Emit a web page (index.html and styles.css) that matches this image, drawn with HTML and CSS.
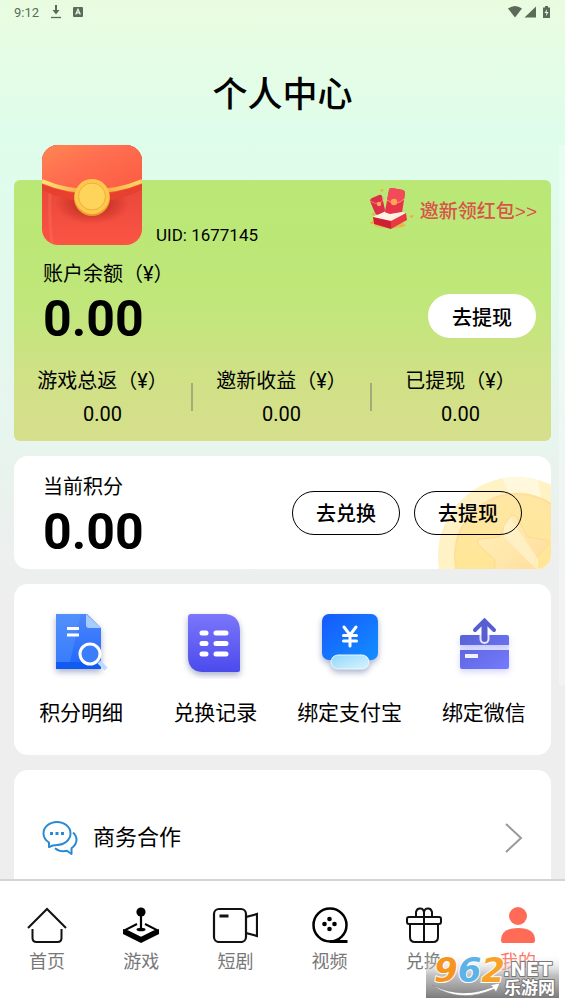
FILE: index.html
```html
<!DOCTYPE html>
<html lang="zh-CN">
<head>
<meta charset="UTF-8">
<meta name="viewport" content="width=device-width, initial-scale=1.0">
<title>个人中心</title>
<link rel="stylesheet" href="styles.css">
</head>
<body>

<main class="page">
    <div class="status-bar">
        <span>9:12</span>
        <svg width="10" height="14" viewBox="0 0 10 14"><path d="M5 0v6" stroke="#5c6b59" stroke-width="2"/><path d="M1.500 5h7L5 9.500z" fill="#5c6b59"/><path d="M0 12.500h10" stroke="#5c6b59" stroke-width="1.300"/></svg>
        <svg width="10" height="10" viewBox="0 0 10 10"><rect width="10" height="10" rx="1" fill="#5c6b59"/><path d="M2.700 7.500L5 2.300l2.300 5.200M3.500 5.800h3" stroke="#e6fbe2" stroke-width="1.300" fill="none"/></svg>
        <svg class="signals" width="43" height="14" viewBox="0 0 43 14" fill="#5c6b59"><path d="M0 3.500Q7 -1.500 14 3.500L7 12.500z"/><path d="M28 1.500v11H16.500z"/><path d="M35 2.500h2V1h3v1.500h2V13h-7z"/><path d="M39.200 4l-2.700 4h2l-.6 3.300 2.700-4.300h-2z" fill="#e6fbe2"/></svg>
    </div>

    <h1 class="title">个人中心</h1>

    <section class="balance-card">
        <div class="profile">
            <svg class="avatar" width="100" height="100" viewBox="0 0 100 100">
                <defs>
                    <linearGradient id="flap" x1="0" y1="0" x2="1" y2="1"><stop offset="0" stop-color="#ff8752"/><stop offset=".4" stop-color="#ff6e50"/><stop offset="1" stop-color="#fb5940"/></linearGradient>
                    <linearGradient id="pocket" x1="0" y1="0" x2="0" y2="1"><stop offset="0" stop-color="#dc3f30"/><stop offset="1" stop-color="#fb5445"/></linearGradient>
                    <linearGradient id="rope" x1="0" y1="0" x2="1" y2="0"><stop offset="0" stop-color="#ffe27c"/><stop offset=".5" stop-color="#f0a036"/><stop offset="1" stop-color="#ffd766"/></linearGradient>
                    <radialGradient id="shade"><stop offset=".4" stop-color="#b92a20" stop-opacity=".7"/><stop offset="1" stop-color="#b92a20" stop-opacity="0"/></radialGradient>
                    <clipPath id="avatarClip"><rect width="100" height="100" rx="16"/></clipPath>
                </defs>
                <g clip-path="url(#avatarClip)">
                    <rect width="100" height="100" fill="url(#pocket)"/>
                    <path d="M8 48q-1 28 2 52" stroke="#ff7560" stroke-width="3" fill="none" opacity=".35"/>
                    <ellipse cx="50" cy="59" rx="37" ry="20" fill="url(#shade)"/>
                    <path d="M0 0h100v45Q75 57 50 57T0 45z" fill="#e8402f"/>
                    <path d="M0 0h100v39Q75 49 50 49T0 39z" fill="url(#flap)"/>
                    <path d="M0 36Q23 46 50 46T100 36" stroke="url(#rope)" stroke-width="4" fill="none"/>
                    <circle cx="50" cy="53" r="18" fill="#e99b2e"/>
                    <circle cx="50" cy="51.500" r="17.500" fill="#ffc84c"/>
                    <circle cx="50" cy="51.500" r="13.500" fill="#ffd45a" stroke="#eeae3c" stroke-width="1"/>
                </g>
            </svg>
            <span class="uid">UID: 1677145</span>
            <a class="invite" href="#invite">
                <svg width="44" height="42" viewBox="0 0 44 42">
                    <ellipse cx="20" cy="37" rx="16" ry="3.500" fill="#e4b84c" opacity=".6"/>
                    <path d="M3 29l11-5 22 1-15 9z" fill="#fff0dd"/>
                    <path d="M0 13q0-2 2-3l7-3q2-1 3 1l3 14q0 2-2 3l-5 2q-2 0-3-2z" fill="#dc2f48"/>
                    <path d="M0 13q6 4 10 2t3-6" stroke="#ff8e72" stroke-width=".8" fill="none"/>
                    <path d="M19 2q0-2 3-2l11 2q2 1 2 3l-3 20q-1 3-4 3l-10-1q-3-1-3-4z" fill="#e83449"/>
                    <path d="M19 2q0-2 3-2l11 2q2 1 2 3l-1 6q-9 8-17 1z" fill="#f34a5a"/>
                    <path d="M17 12q9 7 17-1" stroke="#ff9b7c" stroke-width=".9" fill="none"/>
                    <circle cx="24" cy="14" r="3.200" fill="#ffa552"/><circle cx="9" cy="16" r="2.200" fill="#ffa552"/>
                    <path d="M14 24l6 2 12-2 4 1-15 8-18-4z" fill="#fff3e4"/>
                    <path d="M3 29l18 4v8L4 36z" fill="#cf1f32"/><path d="M21 33l15-8 1 7-16 9z" fill="#e93a41"/>
                    <path d="M10 2l4-1-2 3zM2 25l4 1-3 2zM-1 35l4-2 1 3zM39 28l5-1-2 3zM28 39l4-3 2 2z" fill="#f3a83c"/>
                </svg>
                <span>邀新领红包&gt;&gt;</span>
            </a>
        </div>
        <div class="account">
            <div>
                <div class="label">账户余额（¥）</div>
                <div class="amount">0.00</div>
            </div>
            <button class="pill white" type="button">去提现</button>
        </div>
        <div class="stats">
            <div class="stat"><div class="label">游戏总返（¥）</div><div class="value">0.00</div></div>
            <div class="stat"><div class="label">邀新收益（¥）</div><div class="value">0.00</div></div>
            <div class="stat"><div class="label">已提现（¥）</div><div class="value">0.00</div></div>
        </div>
    </section>

    <section class="card points">
        <svg class="coin" width="113" height="92" viewBox="0 0 113 92">
            <defs>
                <linearGradient id="coinFace" x1="0" y1="0" x2="0" y2="1"><stop offset="0" stop-color="#ffe7a4"/><stop offset="1" stop-color="#ffe58d"/></linearGradient>
                <linearGradient id="star" x1="0" y1="0" x2="1" y2="1"><stop offset="0" stop-color="#fff0bb"/><stop offset="1" stop-color="#ffdc98"/></linearGradient>
            </defs>
            <circle cx="79" cy="79" r="79" fill="#fff2c5"/>
            <path d="M64 2q16-4 36 1l3 18q-16-8-31-5z" fill="#fff8dd"/>
            <circle cx="79" cy="79" r="62" fill="url(#coinFace)" stroke="#ffdf9b" stroke-width="2"/>
            <path d="M71 41q4-6 8 0l11 19 18 3q5 2 1 6L97 82l3 24-20-11-24 11 1-23-16-15q-4-5 2-6l18-2z" fill="url(#star)" stroke="#fcd994"/>
            <path d="M66 49l6-8 28 41v12L66 60z" fill="#fff6d6" opacity=".6"/>
        </svg>
        <div class="score">
            <div class="label">当前积分</div>
            <div class="amount">0.00</div>
        </div>
        <div class="buttons">
            <button class="pill outline" type="button">去兑换</button>
            <button class="pill outline" type="button">去提现</button>
        </div>
    </section>

    <section class="card shortcuts">
        <a href="#detail">
            <svg width="72" height="72" viewBox="0 0 72 72">
                <defs>
                    <linearGradient id="doc" x1="0" y1="0" x2="0" y2="1"><stop offset="0" stop-color="#4c87fb"/><stop offset="1" stop-color="#1f66fb"/></linearGradient>
                </defs>
                <g class="shadow"><path d="M11 7h31l14 14v41H11z" fill="url(#doc)"/></g>
                <path d="M11 7h25L25 55H11z" fill="#62a1ff" opacity=".35"/>
                <path d="M11 55h45v7H11z" fill="#0a55f0" opacity=".7"/>
                <path d="M41 7l15 14H44q-3 0-3-3z" fill="#a7ccff"/>
                <path d="M22 21.500h12M22 28h12" stroke="#fff" stroke-width="3"/>
                <path d="M54 55l7 7" stroke="#bcd9ff" stroke-width="4"/>
                <circle cx="45" cy="47" r="10" fill="#3b7dfa" stroke="#fff" stroke-width="3"/>
            </svg>
            <span>积分明细</span>
        </a>
        <a href="#record">
            <svg width="72" height="72" viewBox="0 0 72 72">
                <defs><linearGradient id="list" x1="0" y1="0" x2="0" y2="1"><stop offset="0" stop-color="#7c76fa"/><stop offset="1" stop-color="#4b4bed"/></linearGradient></defs>
                <g class="shadow"><path d="M12 7h35q14 2 14 17v39q0 2-2 2H23Q9 64 9 49V10q0-3 3-3z" fill="url(#list)"/></g>
                <path d="M23 26h4M37 26h10M23 36.500h4M37 36.500h10M23 47h4M37 47h10" stroke="#fff" stroke-width="5" stroke-linecap="round"/>
            </svg>
            <span>兑换记录</span>
        </a>
        <a href="#alipay">
            <svg width="72" height="72" viewBox="0 0 72 72">
                <defs>
                    <linearGradient id="pay" x1="0" y1="0" x2="1" y2="1"><stop offset="0" stop-color="#1659fc"/><stop offset="1" stop-color="#128fff"/></linearGradient>
                    <linearGradient id="tray" x1="0" y1="0" x2="1" y2="1"><stop offset="0" stop-color="#91d7fa"/><stop offset="1" stop-color="#daf4fe"/></linearGradient>
                </defs>
                <g class="shadow"><rect x="8" y="7" width="56" height="46" rx="7" fill="url(#pay)"/><rect x="17" y="48" width="38" height="14" rx="7" fill="url(#tray)" stroke="#eafaff"/></g>
                <path d="M30 20l6 8 6-8M36 28v11M29.500 28.500h13M29.500 34h13" stroke="#fff" stroke-width="3" fill="none" stroke-linecap="round"/>
            </svg>
            <span>绑定支付宝</span>
        </a>
        <a href="#wechat">
            <svg width="72" height="72" viewBox="0 0 72 72">
                <defs><linearGradient id="bank" x1="0" y1="0" x2="1" y2="1"><stop offset="0" stop-color="#5961d6"/><stop offset="1" stop-color="#747bff"/></linearGradient></defs>
                <rect x="12" y="38" width="49" height="5" fill="#e8e9ff"/>
                <g class="glow"><path d="M14 28h45q2 0 2 2v8H12v-8q0-2 2-2zM12 43h49v17q0 2-2 2H14q-2 0-2-2z" fill="url(#bank)"/></g>
                <rect x="17" y="47" width="13" height="4" fill="#f0f0ff"/>
                <path d="M36.500 22v10" stroke="#fff" stroke-width="10" stroke-linecap="round" stroke-opacity=".85"/>
                <path d="M36.500 17v15" stroke="#565ed2" stroke-width="6" stroke-linecap="round"/>
                <path d="M27 23l9.500-9.500 9.500 9.500" stroke="#565ed2" stroke-width="4" fill="none" stroke-linecap="round"/>
            </svg>
            <span>绑定微信</span>
        </a>
    </section>

    <section class="card menu">
        <a href="#cooperation">
            <svg width="36" height="36" viewBox="0 0 36 36" fill="none" stroke="#2a8ad4" stroke-width="2" stroke-linejoin="round"><path d="M7 27V22.500Q1.500 19 1.500 13.500C1.500 7 7.500 2 15 2s13.500 5 13.500 11.500S22 25 15 25q-4 0-8 2z"/><path d="M31 12.500q3.500 3 3.500 7.500t-5 8.200V34l-4.500-3.200q-7 1.500-12-2.600"/><path d="M8 13.500h3M13.500 13.500h3M19 13.500h3" stroke-width="3"/></svg>
            <span>商务合作</span>
            <svg class="arrow" width="18" height="32" viewBox="0 0 18 32" fill="none" stroke="#999" stroke-width="2"><path d="M1 2l15 14L1 30"/></svg>
        </a>
    </section>

    <div class="scroll-thumb"></div>
</main>

<nav class="tabs">
    <a href="#home">
        <svg width="40" height="36" viewBox="0 0 40 36" fill="none" stroke="#111" stroke-width="2"><path d="M1 21L20 2l19 19"/><path d="M5.500 22v9q0 4 4 4h21q4 0 4-4v-9"/></svg>
        <span>首页</span>
    </a>
    <a href="#game">
        <svg width="36" height="36" viewBox="0 0 36 36"><circle cx="18" cy="5" r="4.600"/><path d="M18 8v14" stroke="#000" stroke-width="2.200"/><ellipse cx="18" cy="22.500" rx="4.500" ry="1.800"/><path d="M14 17L2 23l16 8 16-8-12-6" fill="none" stroke="#000" stroke-width="2"/><path d="M0 22l18 9 18-9v5l-18 9-18-9z"/></svg>
        <span>游戏</span>
    </a>
    <a href="#drama">
        <svg width="46" height="36" viewBox="0 0 46 36" fill="none" stroke="#111" stroke-width="2.200"><rect x="2" y="2" width="32" height="33" rx="5"/><path d="M34 10l11-3v22l-11-3"/><path d="M7.500 9h9" stroke-width="3"/></svg>
        <span>短剧</span>
    </a>
    <a href="#video">
        <svg width="36" height="36" viewBox="0 0 36 36"><circle cx="18" cy="18" r="16.500" fill="none" stroke="#000" stroke-width="2.500"/><path d="M18 34.500h17.500" stroke="#000" stroke-width="3"/><circle cx="17.500" cy="12" r="2.300"/><circle cx="12.500" cy="17" r="2.300"/><circle cx="22.500" cy="17" r="2.300"/><circle cx="17.500" cy="22" r="2.300"/></svg>
        <span>视频</span>
    </a>
    <a href="#exchange">
        <svg width="36" height="36" viewBox="0 0 36 36" fill="none" stroke="#111" stroke-width="2"><rect x="1" y="10" width="34" height="7" rx="2"/><path d="M4 17v13q0 5 5 5h18q5 0 5-5V17M18 10v25"/><path d="M18 10V6q0-4-3.500-4.500T10 5v5M18 10V6q0-4 3.500-4.500T26 5v5"/></svg>
        <span>兑换</span>
    </a>
    <a class="active" href="#mine">
        <svg width="36" height="36" viewBox="0 0 36 36" fill="#ff6b57"><circle cx="18" cy="9" r="9"/><path d="M1 33q0-12 17-12t17 12q0 3-2 3H3q-2 0-2-3z"/></svg>
        <span>我的</span>
    </a>
</nav>

<svg class="watermark" width="133" height="55" viewBox="0 -10 133 55">
    <defs>
        <linearGradient id="haze" x1="0" y1="0" x2="0" y2="1"><stop offset="0" stop-color="#fff" stop-opacity="0"/><stop offset=".5" stop-color="#aaa" stop-opacity=".75"/><stop offset="1" stop-color="#7b7b7b"/></linearGradient>
    </defs>
    <rect width="133" height="45" fill="url(#haze)"/>
    <text class="wm-number" x="8" y="29"><tspan fill="#f7941e">9</tspan><tspan fill="#5db2e8">6</tspan><tspan fill="#f7a329">2</tspan></text>
    <path d="M6 32q29 15 61 2l-3-2 10-2-4 9-2-3Q34 51 6 32z" fill="#fff" stroke="#888" stroke-width=".5"/>
    <text class="wm-net" x="77" y="23">.NET</text>
    <text class="wm-name" x="78" y="41">乐游网</text>
</svg>

</body>
</html>
```
FILE: styles.css
```css
* {
    box-sizing: border-box;
}
body {
    margin: 0;
    height: 100vh;
    display: flex;
    flex-direction: column;
    position: relative;
    font-family: Roboto, "Noto Sans CJK SC", sans-serif;
    font-size: 20px;
    color: #000;
    background: #fff;
}
a {
    color: inherit;
    text-decoration: none;
}
svg {
    display: block;
    flex-shrink: 0;
}
.page {
    flex: 1;
    min-height: 0;
    overflow: hidden;
    position: relative;
    padding: 0 14px;
    background: linear-gradient(#e9fce0, #dffdeb 130px, #e0fbec 220px, #e7f5ee 420px, #eeeeee 600px);
}
.status-bar {
    display: flex;
    align-items: center;
    gap: 12px;
    height: 24px;
    font-size: 13px;
    color: #5c6b59;
}
.signals {
    margin-left: auto;
}
.title {
    margin: 48px 0 60px;
    font-size: 35px;
    font-weight: 500;
    line-height: 48px;
    text-align: center;
}
.label {
    line-height: 28px;
}
.amount {
    font-size: 50px;
    font-weight: 700;
    line-height: 62px;
}
.pill {
    width: 108px;
    height: 44px;
    padding: 0;
    border: none;
    border-radius: 22px;
    font-family: inherit;
    font-size: 20px;
    font-weight: 500;
    color: #000;
}
.white {
    background: #fff;
}
.outline {
    background: transparent;
    border: 1px solid #000;
}

.balance-card {
    display: flow-root;
    border-radius: 6px;
    background: linear-gradient(#b9e876, #bfe779 45%, #d0e186 75%, #d6df8c);
}
.profile {
    display: flex;
    align-items: flex-end;
    gap: 14px;
    margin-top: -35px;
    padding: 0 14px 0 28px;
}
.uid {
    font-size: 17px;
    line-height: 20px;
}
.invite {
    display: flex;
    align-items: center;
    gap: 6px;
    margin-left: auto;
    margin-bottom: 15px;
    font-family: "Liberation Sans", "Noto Sans CJK SC", sans-serif;
    font-size: 19px;
    font-weight: 500;
    color: #d9534a;
}
.account {
    display: flex;
    justify-content: space-between;
    align-items: flex-end;
    padding: 15px 15px 0 29px;
}
.account .pill {
    margin-bottom: 12px;
}
.stats {
    display: grid;
    grid-template-columns: repeat(3, 1fr);
    padding: 17px 0 15px;
    text-align: center;
}
.stat {
    display: grid;
    grid-template-columns: 1fr 2px;
    row-gap: 7px;
}
.stat .label,
.stat .value {
    grid-column: 1;
}
.stat::after {
    content: "";
    grid-column: 2;
    grid-row: 1 / 3;
    height: 28px;
    align-self: center;
    background: #a4aa7b;
}
.stat:last-child::after {
    background: none;
}
.value {
    line-height: 24px;
}

.card {
    margin-top: 15px;
    border-radius: 14px;
    background: #fff;
}
.points {
    position: relative;
    overflow: hidden;
    display: flex;
    justify-content: space-between;
    align-items: center;
    padding: 0 29px;
}
.points > div {
    position: relative;
}
.score {
    padding: 17px 0 6px;
}
.coin {
    position: absolute;
    right: 0;
    bottom: 0;
}
.buttons {
    display: flex;
    gap: 14px;
}
.shortcuts {
    display: grid;
    grid-template-columns: repeat(4, 1fr);
    padding: 23px 0 27px;
    font-size: 21px;
    line-height: 30px;
}
.shortcuts a {
    display: flex;
    flex-direction: column;
    align-items: center;
    gap: 19px;
}
.shadow {
    filter: drop-shadow(0 3px 3px rgba(40, 60, 120, 0.4));
}
.glow {
    filter: drop-shadow(0 3px 3px rgba(110, 120, 255, 0.3));
}
.menu a {
    display: flex;
    align-items: center;
    gap: 15px;
    padding: 50px 28px;
    font-size: 22px;
    line-height: 36px;
}
.arrow {
    margin-left: auto;
}
.scroll-thumb {
    position: absolute;
    top: 145px;
    right: 0;
    width: 6px;
    height: 540px;
    background: rgba(255, 255, 255, 0.3);
}

.tabs {
    display: grid;
    grid-template-columns: repeat(6, 1fr);
    height: 125px;
    padding-top: 26px;
    border-top: 2px solid #d4d4d4;
    background: #fff;
    font-size: 18px;
    line-height: 26px;
    color: #777;
}
.tabs a {
    display: flex;
    flex-direction: column;
    align-items: center;
    gap: 6px;
}
.tabs .active {
    color: #ff6b57;
}

.watermark {
    position: absolute;
    right: 6px;
    bottom: 6px;
    overflow: visible;
}
.watermark text {
    paint-order: stroke;
    stroke-linejoin: round;
}
.wm-number {
    font: italic 700 34px "DejaVu Sans", sans-serif;
    stroke: #fff;
    stroke-width: 2px;
}
.wm-net {
    font: 700 19px "DejaVu Sans", sans-serif;
    fill: #fff;
    stroke: #777;
    stroke-width: 2px;
}
.wm-name {
    font: 700 17px "Noto Sans CJK SC", sans-serif;
    fill: #fff;
    stroke: #777;
    stroke-width: 2px;
}
```
